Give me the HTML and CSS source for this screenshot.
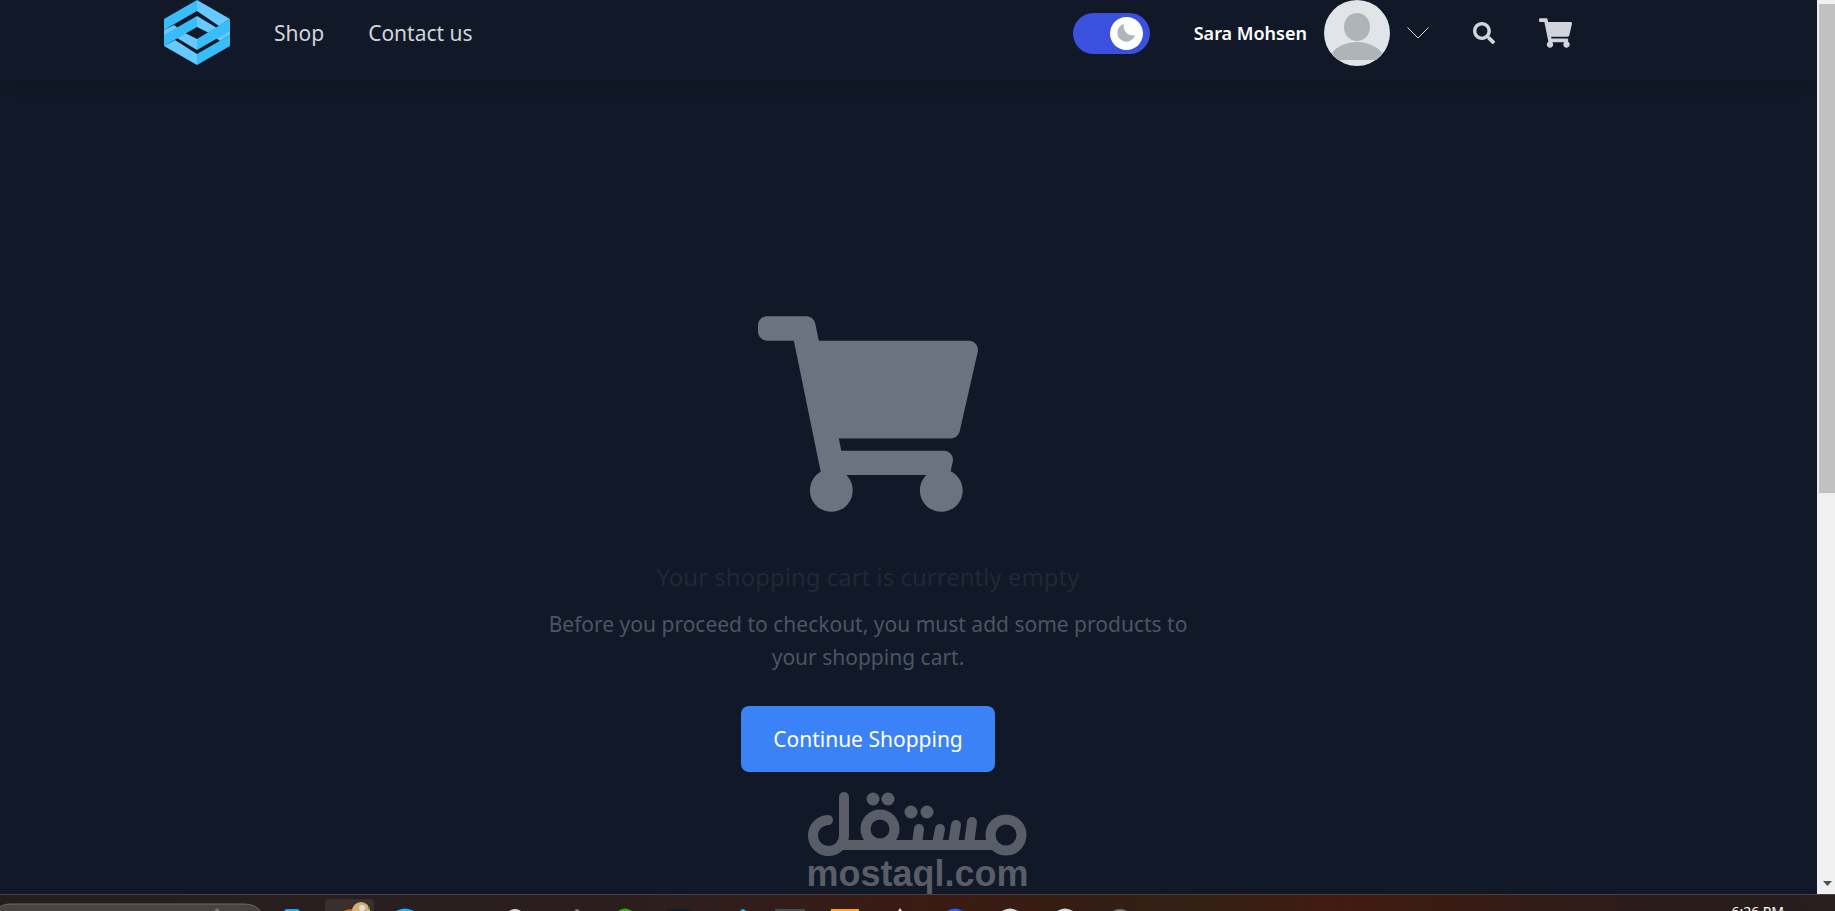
FILE: index.html
```html
<!DOCTYPE html>
<html lang="en">
<head>
<meta charset="utf-8">
<title>Shopping cart</title>
<link rel="stylesheet" href="styles.css">
</head>
<body>
<svg class="defs" aria-hidden="true">
  <symbol id="cart" viewBox="0 0 576 512"><path d="M528.12 301.319l47.273-208C578.806 78.301 567.391 64 551.99 64H159.208l-9.166-44.81C147.758 8.021 137.93 0 126.529 0H24C10.745 0 0 10.745 0 24v16c0 13.255 10.745 24 24 24h69.883l70.248 343.435C147.325 417.1 136 435.222 136 456c0 30.928 25.072 56 56 56s56-25.072 56-56c0-15.674-6.447-29.835-16.824-40h209.647C430.447 426.165 424 440.326 424 456c0 30.928 25.072 56 56 56s56-25.072 56-56c0-22.172-12.888-41.332-31.579-50.405l5.517-24.276c3.413-15.018-8.002-29.319-23.403-29.319H218.117l-6.545-32h293.145c11.206 0 20.92-7.754 23.403-18.681z"/></symbol>
</svg>
<div class="window">
  <div class="page">
    <header class="header">
      <nav class="nav">
        <a class="logo" href="#" aria-label="Home">
          <svg viewBox="0 0 66 66">
            <g fill="#66c9ff">
              <path d="M33 0 66 19 55 26 33 11z"/>
              <path d="M0 30 10 25 14 28 0 36z"/>
              <path d="M66 35 56 41 52 38 66 30z"/>
              <path d="M33 65 0 46 11 40 33 54z"/>
              <path d="M33 16 53 28 45 33 33 27z"/>
              <path d="M33 50 13 38 21 33 33 39z"/>
            </g>
            <g fill="#38bdf8">
              <path d="M33 0 0 19V30L33 11z"/>
              <path d="M33 16 0 35V46L33 27z"/>
              <path d="M33 39 66 19V31L33 50z"/>
              <path d="M33 54 66 35V46L33 65z"/>
            </g>
          </svg>
        </a>
        <a class="link" href="#">Shop</a>
        <a class="link" href="#">Contact us</a>
      </nav>
      <div class="tools">
        <button class="toggle" role="switch" aria-checked="true" aria-label="Dark mode">
          <span class="knob"><svg viewBox="0 0 18 18"><path d="M7 0A9 9 0 1 0 18 11 9 9 0 0 1 7 0z"/></svg></span>
        </button>
        <button class="account">
          <span>Sara Mohsen</span>
          <svg class="avatar" viewBox="0 0 66 66"><circle cx="33" cy="33" r="33" fill="#e1e5e9"/><ellipse cx="33" cy="27" rx="13" ry="14" fill="#aeb4b7"/><path d="M8 53C13 46 23 42 33 42s20 4 25 11q-2 4-6 7H14q-4-3-6-7z" fill="#aeb4b7"/></svg>
          <svg class="chevron" viewBox="0 0 22 12"><path d="M0.500 0.500 11 11 21.500 0.500"/></svg>
        </button>
        <button class="search" aria-label="Search"><svg viewBox="0 0 512 512"><path d="M505 442.700L405.300 343c-4.500-4.500-10.600-7-17-7H372c27.600-35.300 44-79.700 44-128C416 93.100 322.900 0 208 0S0 93.100 0 208s93.100 208 208 208c48.300 0 92.700-16.400 128-44v16.300c0 6.400 2.500 12.500 7 17l99.700 99.700c9.400 9.400 24.600 9.400 33.900 0l28.300-28.300c9.400-9.400 9.400-24.600.1-34zM208 336c-70.700 0-128-57.200-128-128 0-70.700 57.200-128 128-128 70.700 0 128 57.200 128 128 0 70.700-57.200 128-128 128z"/></svg></button>
        <a class="basket" href="#" aria-label="Cart"><svg><use href="#cart"/></svg></a>
      </div>
    </header>
    <main class="empty">
      <svg class="cart"><use href="#cart"/></svg>
      <h1 class="title">Your shopping cart is currently empty</h1>
      <p class="text">Before you proceed to checkout, you must add some products to your shopping cart.</p>
      <a class="continue" href="#">Continue Shopping</a>
      <div class="mark">
        <svg viewBox="0 0 220 64" aria-label="مستقل" role="img">
          <g fill="none" stroke="#595d67" stroke-width="10" stroke-linecap="round">
            <path d="M21 28A15.500 15.500 0 1 0 37 43V5M36 53H185"/><circle cx="73" cy="37" r="14.500"/><circle cx="199" cy="43" r="15.500"/>
            <path d="M112 37 110 52M133 37 130 52M149 33 146 52M165 30 162 52"/>
          </g>
          <g fill="#595d67"><circle cx="66" cy="7" r="6.500"/><circle cx="81" cy="7" r="6.500"/><circle cx="104" cy="20" r="6.500"/><circle cx="120" cy="20" r="6.500"/></g>
        </svg>
        <span>mostaql.com</span>
      </div>
    </main>
  </div>
  <div class="scrollbar"><div class="thumb"></div><svg viewBox="0 0 9 5"><path d="M0 0H9L4.500 5z"/></svg></div>
</div>
<footer class="taskbar">
  <svg class="apps" viewBox="0 0 1160 16">
    <path d="M-4 17Q0 9 10 9H244Q256 9 261 17z" fill="#494240" stroke="#686b70"/>
    <path d="M325 16V7q0-3 4-3h41q4 0 4 3v9z" fill="#39302d"/>
    <path d="M342 17q8-5 14-2v2z" fill="#b96b2c"/><circle cx="361" cy="16" r="9" fill="#d3ad76"/><circle cx="362" cy="13" r="3" fill="#ddd"/><circle cx="369" cy="13" r="1" fill="#3b8b28"/>
    <path d="M284 16q1-2 3-2h10q2 0 3 2z" fill="#29a9e8"/>
    <path d="M396 16q9-5 18 0zM740 16q3-4 6 0z" fill="#29b0ee"/>
    <path d="M214 16l3-3 3 3z" fill="#77777b"/>
    <path d="M618 16q7-5 14 0z" fill="#42a52b"/>
    <path d="M775 14h30v2h-30z" fill="#4b4a50"/><path d="M667 14h25v2h-25z" fill="#171b22"/>
    <path d="M831 14h28v2h-28z" fill="#fba51a"/>
    <path d="M947 16q8-5 16 0z" fill="#315ef5"/>
    <path d="M509 16q6-4 12 0zM898 16l2-3 2 3zM1002 16q8-5 16 0zM1057 16q8-5 16 0z" fill="#ddd"/>
    <path d="M574 16q3-4 6 0zM1113 16q7-4 14 0z" fill="#77777b"/>
  </svg>
  <time class="clock">6:26 PM</time>
</footer>
</body>
</html>
```
FILE: styles.css
```css
* { box-sizing: border-box; }
body {
  margin: 0;
  height: 100vh;
  display: flex;
  flex-direction: column;
  overflow: hidden;
  background: #111827;
  color: #d1d5db;
  font: 21px/33px "Noto Sans", "Open Sans", sans-serif;
}
a { color: inherit; text-decoration: none; }
button { border: 0; padding: 0; background: none; color: inherit; font: inherit; }
svg { display: block; }
.defs { display: none; }

.window { flex: 1; min-height: 0; display: flex; }
.page { flex: 1; min-width: 0; overflow: hidden; }

.header {
  display: flex;
  align-items: flex-start;
  justify-content: space-between;
  height: 81px;
  padding: 0 245px 0 164px;
  box-shadow: 0 14px 10px -8px rgba(16, 20, 28, 0.4);
}
.nav, .tools { display: flex; align-items: center; gap: 44px; height: 66px; }
.logo svg { width: 66px; height: 66px; }
.toggle {
  width: 77px;
  height: 41px;
  padding: 4px 7px;
  border-radius: 21px;
  background: #3b50df;
  display: flex;
  justify-content: flex-end;
}
.knob {
  width: 33px;
  height: 33px;
  border-radius: 50%;
  background: #fff;
  display: grid;
  place-items: center;
}
.knob svg { width: 18px; height: 18px; fill: #b0b5b9; }
.account {
  display: flex;
  align-items: center;
  gap: 17px;
  color: #fff;
  font-size: 18px;
  font-weight: 600;
}
.avatar { width: 66px; height: 66px; }
.chevron { width: 22px; height: 12px; overflow: visible; fill: none; stroke: #d1d5db; }
.search svg { width: 22px; height: 22px; fill: #d1d5db; }
.basket svg { width: 33px; height: 30px; fill: #d1d5db; }

.empty {
  display: flex;
  flex-direction: column;
  align-items: center;
  padding: 235px 245px 0 164px;
  text-align: center;
}
.cart { width: 220px; height: 196px; fill: #6b7280; }
.title { margin: 46px 0 0; color: #1f2937; font-size: 24px; line-height: 38px; font-weight: 400; }
.text { width: 660px; margin: 12px 0 0; color: #4b5563; }
.continue {
  margin-top: 32px;
  padding: 17px 32px 16px;
  border-radius: 8px;
  background: #3b82f6;
  color: #fff;
}
.mark {
  width: 220px;
  margin: 20px 0 0 97px;
  color: #595d67;
  font: 700 36px/36px "Liberation Sans", sans-serif;
}
.mark svg { width: 220px; height: 64px; }
.mark span { display: block; }

.scrollbar {
  width: 18px;
  padding: 4px 0 8px 2px;
  background: #f0f0f0;
  display: flex;
  flex-direction: column;
  justify-content: space-between;
}
.thumb { height: 489px; background: #c1c1c1; }
.scrollbar svg { width: 9px; height: 5px; margin-left: 4px; fill: #505050; }

.taskbar {
  flex: none;
  height: 17px;
  border-top: 1px solid #4a403d;
  display: flex;
  justify-content: space-between;
  overflow: hidden;
  background: linear-gradient(90deg, #251e1e, #2b1f1e 35%, #3b1b13 50%, #351d14 58%, #332015 65%, #421b10 73%, #2a1c1a 90%, #281e1e);
}
.apps { width: 1160px; height: 16px; }
.clock { padding: 7px 51px 0 0; color: #fff; font-size: 14px; line-height: 20px; }
```
